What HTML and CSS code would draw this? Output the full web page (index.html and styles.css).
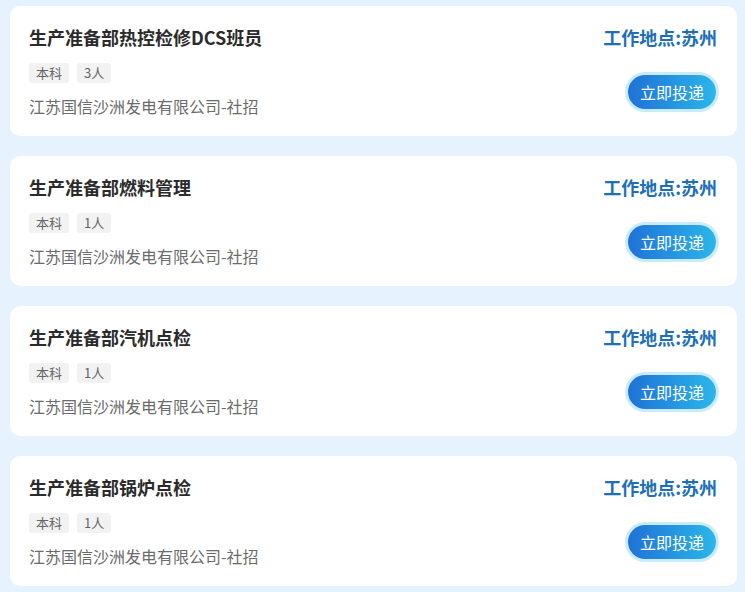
FILE: index.html
```html
<!DOCTYPE html>
<html lang="zh-CN">
<head>
    <meta charset="UTF-8">
    <meta name="viewport" content="width=device-width, initial-scale=1.0">
    <title>招聘岗位</title>
    <link rel="stylesheet" href="styles.css">
</head>
<body>
    <main class="job-list">
        <div class="job-card">
            <div class="job-info">
                <h3 class="job-title">生产准备部热控检修DCS班员</h3>
                <div class="job-tags">
                    <span class="tag">本科</span>
                    <span class="tag">3人</span>
                </div>
                <p class="job-company">江苏国信沙洲发电有限公司-社招</p>
            </div>
            <div class="job-side">
                <div class="job-place">工作地点:苏州</div>
                <a class="apply-btn">立即投递</a>
            </div>
        </div>
        <div class="job-card">
            <div class="job-info">
                <h3 class="job-title">生产准备部燃料管理</h3>
                <div class="job-tags">
                    <span class="tag">本科</span>
                    <span class="tag">1人</span>
                </div>
                <p class="job-company">江苏国信沙洲发电有限公司-社招</p>
            </div>
            <div class="job-side">
                <div class="job-place">工作地点:苏州</div>
                <a class="apply-btn">立即投递</a>
            </div>
        </div>
        <div class="job-card">
            <div class="job-info">
                <h3 class="job-title">生产准备部汽机点检</h3>
                <div class="job-tags">
                    <span class="tag">本科</span>
                    <span class="tag">1人</span>
                </div>
                <p class="job-company">江苏国信沙洲发电有限公司-社招</p>
            </div>
            <div class="job-side">
                <div class="job-place">工作地点:苏州</div>
                <a class="apply-btn">立即投递</a>
            </div>
        </div>
        <div class="job-card">
            <div class="job-info">
                <h3 class="job-title">生产准备部锅炉点检</h3>
                <div class="job-tags">
                    <span class="tag">本科</span>
                    <span class="tag">1人</span>
                </div>
                <p class="job-company">江苏国信沙洲发电有限公司-社招</p>
            </div>
            <div class="job-side">
                <div class="job-place">工作地点:苏州</div>
                <a class="apply-btn">立即投递</a>
            </div>
        </div>
    </main>
</body>
</html>
```

FILE: styles.css
```css
body {
    margin: 0;
    background-color: #e6f2fd; /* light blue page */
    font-family: "Noto Sans CJK SC", "Noto Sans", sans-serif;
    color: #333333;
}

.job-list {
    display: flex;
    flex-direction: column;
    gap: 20px;
    padding: 6px 8px 0 10px;
}

.job-card {
    display: flex;
    justify-content: space-between;
    height: 130px;
    box-sizing: border-box;
    padding: 18px 20px 0 19px;
    background-color: #ffffff;
    border-radius: 10px;
}

.job-title {
    margin: 0;
    font-size: 18px;
    line-height: 26px;
    font-weight: 700;
    color: #2b2b2b;
}

.job-tags {
    display: flex;
    gap: 8px;
    margin-top: 13px;
}

.tag {
    height: 20px;
    line-height: 20px;
    padding: 0 7px;
    font-size: 13px;
    color: #666666;
    background-color: #f2f2f2;
    border-radius: 3px;
}

.job-company {
    margin: 11px 0 0 0;
    font-size: 16px;
    line-height: 24px;
    color: #6b6b6b;
}

.job-side {
    display: flex;
    flex-direction: column;
    align-items: flex-end;
}

.job-place {
    font-size: 18px;
    line-height: 26px;
    font-weight: 700;
    color: #1d6fb8; /* blue location */
}

.apply-btn {
    margin-top: 25px;
    margin-right: 1px;
    width: 88px;
    height: 34px;
    line-height: 34px;
    text-align: center;
    font-size: 16px;
    color: #ffffff;
    border-radius: 17px;
    background: linear-gradient(90deg, #1f72d6, #2bb6ea);
    box-shadow: 0 0 0 3px #c9ebfb;
    cursor: pointer;
}
```
